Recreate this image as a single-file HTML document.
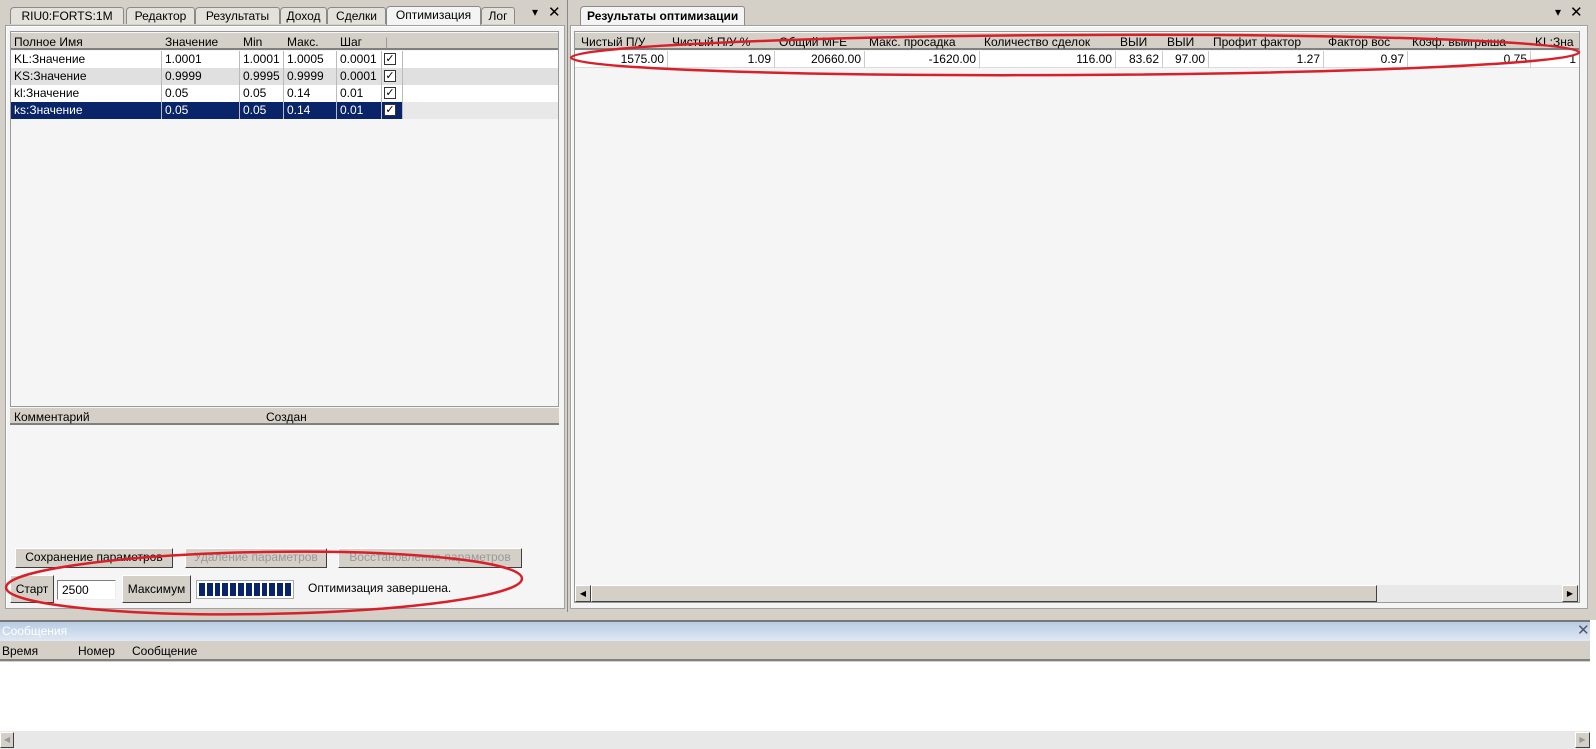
<!DOCTYPE html>
<html><head><meta charset="utf-8"><style>
*{box-sizing:border-box;margin:0;padding:0}
body{width:1596px;height:749px;overflow:hidden;background:#d4d0c8;font-family:"Liberation Sans","DejaVu Sans",sans-serif;font-size:12px;color:#000;position:relative}
.a{position:absolute}
.tab{position:absolute;top:7px;height:17px;border:1px solid #8a8a8a;border-bottom:none;background:#e4e1da;padding:1px 0 0;text-align:center;white-space:nowrap;font-size:12px;border-radius:4px 3px 0 0}
.panel{position:absolute;border:1px solid #a0a0a0;background:#f4f4f4;box-shadow:inset 1px 1px 0 #fff}
.hdr{position:absolute;background:#d4d0c8;border-bottom:2px solid #808080;height:17px}
.c{position:absolute;white-space:nowrap;overflow:hidden;padding-left:2px;line-height:16px}
.r{text-align:right;padding-right:3px}
.btn{position:absolute;background:#d4d0c8;border:1px solid;border-color:#fff #404040 #404040 #fff;text-align:center;white-space:nowrap;line-height:17px}
.cb{position:absolute;width:12px;height:12px;border:1px solid #333;background:#fff;font-size:11px;line-height:10px;text-align:center}
</style></head><body>
<div class="a" style="left:0;top:0;width:568px;height:612px;background:#d4d0c8;border-right:1px solid #888"></div>
<div class="tab" style="left:10px;width:114px">RIU0:FORTS:1M</div>
<div class="tab" style="left:126px;width:69px">Редактор</div>
<div class="tab" style="left:195px;width:85px">Результаты</div>
<div class="tab" style="left:280px;width:47px">Доход</div>
<div class="tab" style="left:327px;width:59px">Сделки</div>
<div class="tab" style="left:386px;width:95px;background:#f4f4f4;top:6px;height:19px">Оптимизация</div>
<div class="tab" style="left:481px;width:34px">Лог</div>
<div class="a" style="left:532px;top:5px;font-size:12px">▾</div>
<div class="a" style="left:548px;top:3px;font-size:15px">✕</div>
<div class="panel" style="left:5px;top:25px;width:560px;height:584px"></div>
<div class="a" style="left:10px;top:31px;width:549px;height:376px;background:#f5f5f5;border:1px solid #999"></div>
<div class="hdr" style="left:11px;top:33px;width:547px"></div>
<div class="c" style="left:12px;top:34px">Полное Имя</div>
<div class="c" style="left:163px;top:34px">Значение</div>
<div class="c" style="left:241px;top:34px">Min</div>
<div class="c" style="left:285px;top:34px">Макс.</div>
<div class="c" style="left:338px;top:34px">Шаг</div>
<div class="c" style="left:383px;top:34px;color:#999">|</div>
<div class="a" style="left:11px;top:51px;width:547px;height:17px;background:#fff"></div>
<div class="a" style="left:11px;top:68px;width:547px;height:17px;background:#e0e0e0"></div>
<div class="a" style="left:11px;top:85px;width:547px;height:17px;background:#fff"></div>
<div class="a" style="left:11px;top:102px;width:547px;height:17px;background:#e8e8e8"></div>
<div class="a" style="left:11px;top:102px;width:391px;height:17px;background:#0a246a"></div>
<div class="a" style="left:161px;top:51px;width:1px;height:68px;background:#bbb"></div>
<div class="a" style="left:239px;top:51px;width:1px;height:68px;background:#bbb"></div>
<div class="a" style="left:283px;top:51px;width:1px;height:68px;background:#bbb"></div>
<div class="a" style="left:336px;top:51px;width:1px;height:68px;background:#bbb"></div>
<div class="a" style="left:381px;top:51px;width:1px;height:68px;background:#bbb"></div>
<div class="a" style="left:402px;top:51px;width:1px;height:68px;background:#bbb"></div>
<div class="c" style="left:12px;top:51px">KL:Значение</div><div class="c" style="left:163px;top:51px">1.0001</div><div class="c" style="left:241px;top:51px">1.0001</div><div class="c" style="left:285px;top:51px">1.0005</div><div class="c" style="left:338px;top:51px">0.0001</div>
<div class="c" style="left:12px;top:68px">KS:Значение</div><div class="c" style="left:163px;top:68px">0.9999</div><div class="c" style="left:241px;top:68px">0.9995</div><div class="c" style="left:285px;top:68px">0.9999</div><div class="c" style="left:338px;top:68px">0.0001</div>
<div class="c" style="left:12px;top:85px">kl:Значение</div><div class="c" style="left:163px;top:85px">0.05</div><div class="c" style="left:241px;top:85px">0.05</div><div class="c" style="left:285px;top:85px">0.14</div><div class="c" style="left:338px;top:85px">0.01</div>
<div class="c" style="left:12px;top:102px;color:#fff">ks:Значение</div><div class="c" style="left:163px;top:102px;color:#fff">0.05</div><div class="c" style="left:241px;top:102px;color:#fff">0.05</div><div class="c" style="left:285px;top:102px;color:#fff">0.14</div><div class="c" style="left:338px;top:102px;color:#fff">0.01</div>
<div class="cb" style="left:384px;top:53px">✓</div><div class="cb" style="left:384px;top:70px">✓</div><div class="cb" style="left:384px;top:87px">✓</div><div class="cb" style="left:384px;top:104px">✓</div>
<div class="a" style="left:10px;top:407px;width:549px;height:195px;background:#f5f5f5"></div>
<div class="hdr" style="left:10px;top:408px;width:549px"></div>
<div class="c" style="left:12px;top:409px">Комментарий</div>
<div class="c" style="left:264px;top:409px">Создан</div>
<div class="btn" style="left:15px;top:548px;width:158px;height:20px">Сохранение параметров</div>
<div class="btn" style="left:185px;top:548px;width:142px;height:20px;color:#999">Удаление параметров</div>
<div class="btn" style="left:338px;top:548px;width:184px;height:20px;color:#999">Восстановление параметров</div>
<div class="btn" style="left:10px;top:575px;width:44px;height:28px;line-height:26px">Старт</div>
<div class="a" style="left:57px;top:580px;width:59px;height:20px;background:#fff;border:1px solid;border-color:#808080 #eee #eee #808080;padding-left:4px;line-height:18px">2500</div>
<div class="btn" style="left:122px;top:575px;width:69px;height:28px;line-height:26px">Максимум</div>
<div class="a" style="left:196px;top:580px;width:98px;height:19px;border:1px solid #aaa;background:#fff;padding:2px;display:flex;gap:2px">
<div style="flex:1;background:#0a246a"></div><div style="flex:1;background:#0a246a"></div><div style="flex:1;background:#0a246a"></div><div style="flex:1;background:#0a246a"></div><div style="flex:1;background:#0a246a"></div><div style="flex:1;background:#0a246a"></div><div style="flex:1;background:#0a246a"></div><div style="flex:1;background:#0a246a"></div><div style="flex:1;background:#0a246a"></div><div style="flex:1;background:#0a246a"></div><div style="flex:1;background:#0a246a"></div><div style="flex:1;background:#0a246a"></div></div>
<div class="c" style="left:306px;top:580px">Оптимизация завершена.</div>
<div class="tab" style="left:580px;top:6px;height:19px;background:#f4f4f4;font-weight:bold;padding:2px 6px 0">Результаты оптимизации</div>
<div class="a" style="left:1555px;top:5px;font-size:12px">▾</div>
<div class="a" style="left:1570px;top:3px;font-size:15px">✕</div>
<div class="panel" style="left:570px;top:25px;width:1018px;height:584px"></div>
<div class="a" style="left:574px;top:31px;width:1006px;height:572px;background:#f5f5f5;border:1px solid #999"></div>
<div class="hdr" style="left:575px;top:33px;width:1004px"></div>
<div class="a" style="left:575px;top:51px;width:1004px;height:17px;background:#fff;border-bottom:1px solid #ddd"></div>
<div class="c" style="left:579px;top:34px">Чистый П/У</div>
<div class="c" style="left:670px;top:34px">Чистый П/У %</div>
<div class="c" style="left:777px;top:34px">Общий MFE</div>
<div class="c" style="left:867px;top:34px">Макс. просадка</div>
<div class="c" style="left:982px;top:34px">Количество сделок</div>
<div class="c" style="left:1118px;top:34px">ВЫИ</div>
<div class="c" style="left:1165px;top:34px">ВЫИ</div>
<div class="c" style="left:1211px;top:34px">Профит фактор</div>
<div class="c" style="left:1326px;top:34px">Фактор вос</div>
<div class="c" style="left:1410px;top:34px">Коэф. выигрыша</div>
<div class="c" style="left:1533px;top:34px;width:46px">KL:Зна</div>
<div class="c r" style="left:575px;top:51px;width:92px">1575.00</div>
<div class="c r" style="left:667px;top:51px;width:107px">1.09</div>
<div class="c r" style="left:774px;top:51px;width:90px">20660.00</div>
<div class="c r" style="left:864px;top:51px;width:115px">-1620.00</div>
<div class="c r" style="left:979px;top:51px;width:136px">116.00</div>
<div class="c r" style="left:1115px;top:51px;width:47px">83.62</div>
<div class="c r" style="left:1162px;top:51px;width:46px">97.00</div>
<div class="c r" style="left:1208px;top:51px;width:115px">1.27</div>
<div class="c r" style="left:1323px;top:51px;width:84px">0.97</div>
<div class="c r" style="left:1407px;top:51px;width:123px">0.75</div>
<div class="c r" style="left:1530px;top:51px;width:49px">1</div>
<div class="a" style="left:667px;top:51px;width:1px;height:17px;background:#ccc"></div>
<div class="a" style="left:774px;top:51px;width:1px;height:17px;background:#ccc"></div>
<div class="a" style="left:864px;top:51px;width:1px;height:17px;background:#ccc"></div>
<div class="a" style="left:979px;top:51px;width:1px;height:17px;background:#ccc"></div>
<div class="a" style="left:1115px;top:51px;width:1px;height:17px;background:#ccc"></div>
<div class="a" style="left:1162px;top:51px;width:1px;height:17px;background:#ccc"></div>
<div class="a" style="left:1208px;top:51px;width:1px;height:17px;background:#ccc"></div>
<div class="a" style="left:1323px;top:51px;width:1px;height:17px;background:#ccc"></div>
<div class="a" style="left:1407px;top:51px;width:1px;height:17px;background:#ccc"></div>
<div class="a" style="left:1530px;top:51px;width:1px;height:17px;background:#ccc"></div>
<div class="a" style="left:575px;top:585px;width:1004px;height:17px;background:#e8e8e8"></div>
<div class="btn" style="left:575px;top:585px;width:16px;height:17px;font-size:8px;line-height:15px">◀</div>
<div class="btn" style="left:591px;top:585px;width:786px;height:17px"></div>
<div class="btn" style="left:1562px;top:585px;width:16px;height:17px;font-size:8px;line-height:15px">▶</div>
<div class="a" style="left:0;top:620px;width:1590px;height:21px;background:linear-gradient(#b8cce4,#e0e8f4);border-top:2px solid #777"></div>
<div class="c" style="left:0;top:623px;color:#fff;font-size:12px">Сообщения</div>
<div class="a" style="left:1577px;top:621px;font-size:15px;color:#556">✕</div>
<div class="hdr" style="left:0;top:641px;width:1590px;height:20px"></div>
<div class="c" style="left:0;top:643px">Время</div>
<div class="c" style="left:76px;top:643px">Номер</div>
<div class="c" style="left:130px;top:643px">Сообщение</div>
<div class="a" style="left:0;top:662px;width:1590px;height:69px;background:#fff"></div>
<div class="a" style="left:0;top:731px;width:1590px;height:18px;background:#e8e8e8"></div>
<div class="btn" style="left:0;top:732px;width:14px;height:16px;font-size:8px;line-height:14px;color:#999">◀</div>
<div class="btn" style="left:1575px;top:732px;width:15px;height:16px;font-size:8px;line-height:14px;color:#999">▶</div>
<div class="a" style="left:1590px;top:620px;width:6px;height:129px;background:#fff"></div>
<svg class="a" style="left:0;top:0" width="1596" height="749">
<ellipse cx="1075" cy="55" rx="504" ry="20" fill="none" stroke="#d8202a" stroke-width="2.5" transform="rotate(-0.3 1075 55)"/>
<ellipse cx="264" cy="583" rx="258" ry="31" fill="none" stroke="#d8202a" stroke-width="2.5" transform="rotate(-1 264 583)"/>
</svg>
</body></html>
